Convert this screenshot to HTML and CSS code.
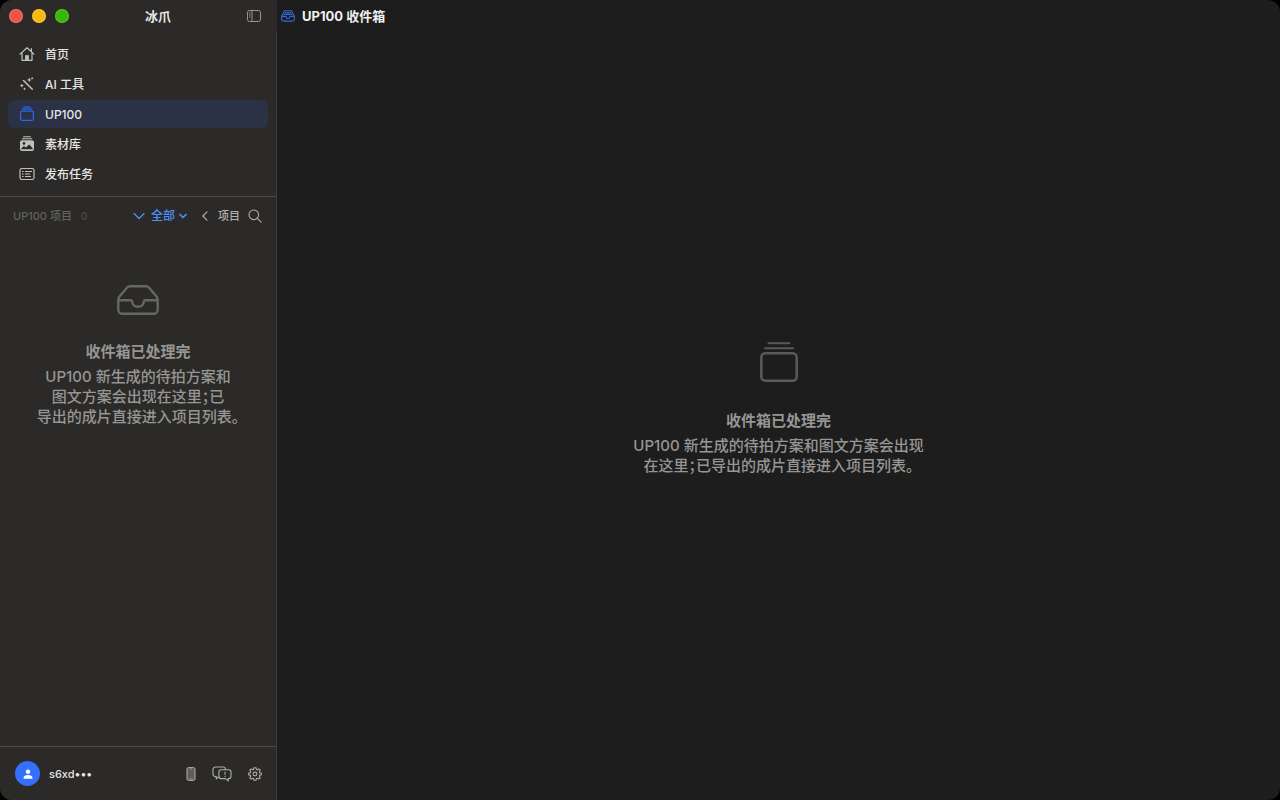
FILE: index.html
```html
<!DOCTYPE html>
<html lang="zh-CN">
<head>
<meta charset="utf-8">
<meta name="viewport" content="width=device-width, initial-scale=1">
<title>冰爪</title>
<link rel="stylesheet" href="styles.css">
</head>
<body>
<div class="window">
  <aside class="sidebar">
    <header class="titlebar">
      <div class="lights">
        <button class="light light-close" aria-label="关闭"></button>
        <button class="light light-min" aria-label="最小化"></button>
        <button class="light light-zoom" aria-label="缩放"></button>
      </div>
      <h1 class="app-name">冰爪</h1>
      <button class="icon-button toggle" aria-label="切换边栏">
        <svg width="14" height="12" viewBox="0 0 14 12" fill="none" stroke="currentColor"><rect x=".5" y=".5" width="13" height="11" rx="2"/><path d="M5 .5v11M2 3h1.5M2 5h1.5M2 7h1.5"/></svg>
      </button>
    </header>
    <nav class="nav">
      <a class="nav-item" href="#home">
        <svg class="nav-icon" viewBox="0 0 16 16" fill="none" stroke="currentColor" stroke-width="1.2" stroke-linejoin="round" stroke-linecap="round"><path d="M1 8.1 8 1.8l7 6.3M3 6.8v7.5h10V6.8M12.4 5.4V2.5"/><path d="M6.5 14V9.6h3V14z" fill="currentColor" stroke-width=".8"/></svg>
        <span>首页</span>
      </a>
      <a class="nav-item" href="#ai">
        <svg class="nav-icon" viewBox="0 0 16 16" fill="none" stroke="currentColor" stroke-width="1" stroke-linecap="round"><path d="M4.500 4.500l8.800 8.800" stroke-width="1.500"/><path d="M10.300 2.400v3M8.800 3.900h3M2.800 8.400v2.400M1.600 9.600h2.400M5.500 12.200v1.200M4.900 12.800h1.200M13.200 1.800v1M12.700 2.300h1"/></svg>
        <span>AI 工具</span>
      </a>
      <a class="nav-item selected" href="#up100" aria-current="page">
        <svg class="nav-icon" viewBox="0 0 16 16" fill="none" stroke="currentColor" stroke-width="1.2" stroke-linecap="round"><rect x="1.6" y="5.1" width="12.8" height="9.3" rx="1.7"/><path d="M3.3 3.2h9.4M4.8 1.2h6.4"/></svg>
        <span>UP100</span>
      </a>
      <a class="nav-item" href="#library">
        <svg class="nav-icon" viewBox="0 0 16 16"><path d="M4.6.8h6.8M3.2 2.8h9.6" stroke="currentColor" stroke-width="1.1" stroke-linecap="round"/><rect x="1" y="4.2" width="14" height="10.8" rx="2" fill="currentColor"/><circle cx="5" cy="7.4" r="1.3" fill="#2b2a28"/><path d="M2.5 13.2v-1l2.5-2.1 1.8 1.4 3.4-3.1 3.4 3.5v1.3z" fill="#2b2a28"/></svg>
        <span>素材库</span>
      </a>
      <a class="nav-item" href="#tasks">
        <svg class="nav-icon" viewBox="0 0 16 16" fill="none" stroke="currentColor"><rect x="1" y="2.5" width="14" height="11" rx="1.8" stroke-width="1.2"/><path d="M3 5.5h1.6M6 5.5h7M3 8h1.6M6 8h5M3 10.5h1.6M6 10.5h6"/></svg>
        <span>发布任务</span>
      </a>
    </nav>
    <div class="list-header">
      <h2 class="list-title">UP100 项目</h2>
      <span class="count">0</span>
      <button class="filter">
        <svg width="12" height="8" viewBox="0 0 12 8" fill="none" stroke="currentColor" stroke-width="1.3" stroke-linecap="round" stroke-linejoin="round"><path d="M1 1.5 6 6.5l5-5"/></svg>
        <span>全部</span>
        <svg class="caret" width="8" height="6" viewBox="0 0 8 6" fill="none" stroke="currentColor" stroke-width="1.7" stroke-linecap="round" stroke-linejoin="round"><path d="M1 1.5l3 3 3-3"/></svg>
      </button>
      <button class="back">
        <svg width="6" height="10" viewBox="0 0 6 10" fill="none" stroke="currentColor" stroke-width="1.1" stroke-linecap="round" stroke-linejoin="round"><path d="M5 .8.8 5 5 9.2"/></svg>
        <span>项目</span>
      </button>
      <button class="icon-button search" aria-label="搜索">
        <svg width="14" height="14" viewBox="0 0 14 14" fill="none" stroke="currentColor" stroke-width="1.1" stroke-linecap="round"><circle cx="5.8" cy="5.8" r="4.8"/><path d="M9.3 9.3l3.9 3.9"/></svg>
      </button>
    </div>
    <section class="empty empty-side">
      <svg width="42" height="30" viewBox="0 0 42 30" fill="none" stroke="currentColor" stroke-width="2.4" stroke-linejoin="round"><path d="M1.3 14.5v10.2a4 4 0 0 0 4 4h31.4a4 4 0 0 0 4-4V14.5c0-1-.3-1.800-1-2.700L32.300 3C31.300 1.700 30.200 1.200 28.700 1.200H13.300C11.800 1.200 10.700 1.700 9.700 3L2.300 11.800c-.7.9-1 1.700-1 2.700z"/><path d="M1.5 15.200h12.200c.8 0 1.400.6 1.400 1.400a5.900 5.200 0 0 0 11.800 0c0-.8.6-1.400 1.400-1.400h12.200"/></svg>
      <h3>收件箱已处理完</h3>
      <p>UP100 新生成的待拍方案和<br>图文方案会出现在这里；已<br>导出的成片直接进入项目列表。</p>
    </section>
    <footer class="account">
      <button class="profile">
        <span class="avatar"><svg width="10" height="10" viewBox="0 0 10 10" fill="currentColor"><circle cx="5" cy="2.700" r="2.200"/><path d="M.5 9.200C.5 7 2.400 5.900 5 5.900S9.500 7 9.500 9.200c0 .4-.3.600-.7.600H1.200c-.4 0-.7-.2-.7-.6z"/></svg></span>
        <span>s6xd•••</span>
      </button>
      <div class="tools">
        <button class="icon-button" aria-label="手机">
          <svg width="10" height="14" viewBox="0 0 10 14" fill="none" stroke="currentColor"><rect x="1" y=".6" width="8" height="12.800" rx="1.500" fill="#5e5d5b"/><path d="M4 2h2M3.500 11.900h3" stroke-width=".7"/></svg>
        </button>
        <button class="icon-button" aria-label="反馈">
          <svg width="20" height="16" viewBox="0 0 20 16" fill="none" stroke="currentColor" stroke-width="1.100" stroke-linejoin="round"><path d="M7 10.600l-2.700 2.300v-2.300H3.500a2.500 2.500 0 0 1-2.500-2.500V3.500A2.500 2.500 0 0 1 3.500 1h7.500a2.500 2.500 0 0 1 2.500 2.500"/><path d="M9.200 3.700h7.500A2.300 2.300 0 0 1 19 6v4.300a2.300 2.300 0 0 1-2.300 2.300h-.5v2.300l-2.700-2.300H9.200a2.300 2.300 0 0 1-2.300-2.300V6a2.300 2.300 0 0 1 2.300-2.300zM13 5.800v3M13 9.800v1.100"/></svg>
        </button>
        <button class="icon-button" aria-label="设置">
          <svg width="14" height="14" viewBox="0 0 14 14" fill="none" stroke="currentColor" stroke-width="1.100" stroke-linejoin="round"><path d="M6 .7h2l.4 1.700 1 .4 1.500-.9 1.300 1.300-.9 1.500.4 1 1.600.4v1.800l-1.600.4-.4 1 .9 1.500-1.300 1.300-1.500-.9-1 .4L8 13.300H6l-.4-1.700-1-.4-1.500.9-1.300-1.300.9-1.500-.4-1L.7 7.900V6.100l1.600-.4.4-1-.9-1.500 1.300-1.300 1.500.9 1-.4z"/><circle cx="7" cy="7" r="1.900"/></svg>
        </button>
      </div>
    </footer>
  </aside>
  <main class="content">
    <header class="content-title">
      <svg width="14" height="12" viewBox="0 0 14 12" fill="none" stroke="currentColor" stroke-width="1.100" stroke-linejoin="round"><path d="M.7 6.200v3.300a1.600 1.600 0 0 0 1.600 1.600h9.400a1.600 1.600 0 0 0 1.600-1.600V6.200L11 1.700C10.600 1 10.200.7 9.500.7h-5C3.800.7 3.400 1 3 1.700zM.7 6.400h3.700c.4 0 .6.300.7.700.2 1 1 1.400 1.900 1.400s1.700-.4 1.900-1.400c.1-.4.3-.7.7-.7h3.700M3 4.400h8M4 2.700h6"/></svg>
      <h2>UP100 收件箱</h2>
    </header>
    <section class="empty empty-main">
      <svg width="38" height="40" viewBox="0 0 38 40" fill="none" stroke="currentColor" stroke-linecap="round"><rect x="1.300" y="11.300" width="35.400" height="27.400" rx="4" stroke-width="2.500"/><path d="M8.500 1.200h21M5 6.200h28" stroke-width="2"/></svg>
      <h3>收件箱已处理完</h3>
      <p>UP100 新生成的待拍方案和图文方案会出现<br>在这里；已导出的成片直接进入项目列表。</p>
    </section>
  </main>
</div>
</body>
</html>
```
FILE: styles.css
```css
* {
  box-sizing: border-box;
}

body {
  margin: 0;
  background: #000;
  color: #e6e6e5;
  font: 500 12px/16px Inter, "Noto Sans CJK SC", sans-serif;
}

h1, h2, h3, p {
  margin: 0;
}

button {
  display: flex;
  align-items: center;
  padding: 0;
  border: 0;
  background: none;
  color: inherit;
  font: inherit;
}

svg {
  display: block;
  flex: none;
}

.window {
  display: grid;
  grid-template-columns: 277px 1fr;
  min-height: 100vh;
  overflow: hidden;
  border-radius: 12px;
  background: #1d1d1d;
}

.sidebar {
  display: flex;
  flex-direction: column;
  background: linear-gradient(#3b3b3a, #3b3b3a) right 32px / 1px 100% no-repeat #2b2a28;
}

.titlebar {
  display: flex;
  align-items: center;
  justify-content: space-between;
  height: 32px;
  padding: 0 16px 0 9px;
}

.lights {
  display: flex;
  gap: 9px;
}

.light {
  width: 14px;
  height: 14px;
  border-radius: 50%;
  box-shadow: inset 0 0 1px 1px rgb(255 255 255 / 20%);
}

.light-close { background: #ee5548; }
.light-min { background: #f9b80c; }
.light-zoom { background: #35b805; }

.app-name {
  font-size: 13px;
  font-weight: 700;
}

.icon-button {
  color: #aeaeac;
}

.toggle {
  color: #969694;
}

.nav {
  display: flex;
  flex-direction: column;
  gap: 2px;
  padding: 8px 9px 8px 8px;
}

.nav-item {
  display: flex;
  align-items: center;
  gap: 10px;
  height: 28px;
  padding: 0 11px;
  border-radius: 6px;
  color: inherit;
  line-height: 18px;
  text-decoration: none;
}

.nav-item span {
  padding-top: 2px;
}

.nav-icon {
  width: 16px;
  height: 16px;
  color: #c0c0be;
}

.selected {
  background: #2b3245;
}

.selected .nav-icon {
  color: #2f67e8;
}

.list-header {
  display: flex;
  align-items: center;
  height: 39px;
  margin-right: 1px;
  padding: 0 14px 0 13px;
  border-top: 1px solid #4a4a48;
}

.list-title {
  color: #62615f;
  font-size: 11px;
  font-weight: 500;
}

.count {
  margin-left: 9px;
  color: #4b4a49;
  font-size: 10px;
}

.filter {
  gap: 6px;
  margin-left: auto;
  color: #4a90f5;
}

.filter .caret {
  margin-left: -2px;
}

.back {
  gap: 10px;
  margin-left: 15px;
  color: #b0b0ae;
  font-size: 11px;
}

.search {
  margin-left: 8px;
}

.empty {
  display: flex;
  flex-direction: column;
  align-items: center;
  color: #666664;
  text-align: center;
}

.empty h3,
.empty p {
  color: #969694;
  font-size: 15px;
  line-height: 20px;
}

.empty h3 {
  font-weight: 700;
}

.empty p {
  margin-top: 5px;
  font-feature-settings: "halt";
  white-space: nowrap;
}

.empty-side {
  flex: 1;
  padding: 50px 1px 0 0;
}

.empty-side h3 {
  margin-top: 27px;
}

.account {
  display: flex;
  align-items: center;
  justify-content: space-between;
  height: 54px;
  margin-right: 1px;
  padding: 0 14px 0 15px;
  border-top: 1px solid #4a4a48;
}

.profile {
  gap: 9px;
  font-size: 11px;
}

.avatar {
  display: grid;
  place-items: center;
  width: 25px;
  height: 25px;
  border-radius: 50%;
  background: #3470fb;
  color: #fff;
}

.tools {
  display: flex;
  align-items: center;
  gap: 16px;
}

.content {
  display: flex;
  flex-direction: column;
}

.content-title {
  display: flex;
  align-items: center;
  gap: 7px;
  height: 32px;
  padding-left: 4px;
  color: #3467e0;
}

.content-title h2 {
  color: #f0f0f0;
  font-size: 13px;
  font-weight: 700;
}

.empty-main {
  flex: 1;
  justify-content: center;
  padding-bottom: 14px;
  color: #595959;
}

.empty-main h3 {
  margin-top: 29px;
}
```
